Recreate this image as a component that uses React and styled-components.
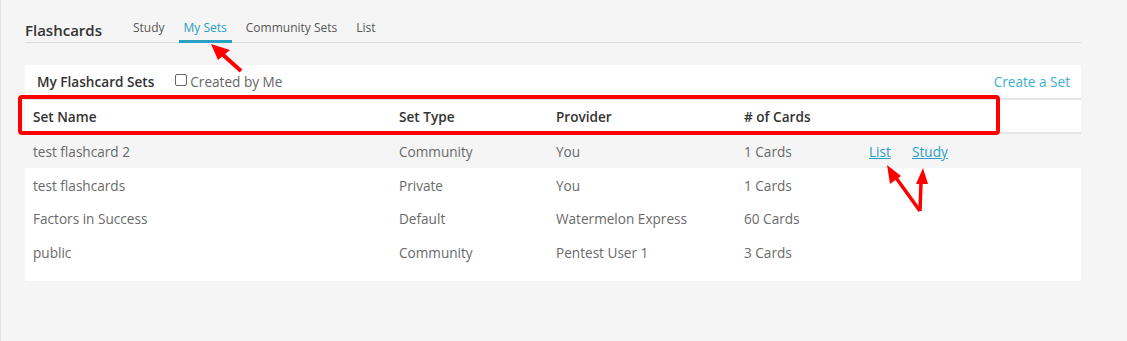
import React from "react";
import styled, { createGlobalStyle } from "styled-components";

const Global = createGlobalStyle`
  html, body { margin: 0; padding: 0; background: #f5f5f5; }
  body { font-family: "Open Sans", "Noto Sans", sans-serif; }
`;

const Page = styled.div`
  position: relative;
  width: 1127px;
  height: 341px;
  box-sizing: border-box;
  border-left: 1px solid #e2e2e2;
  background: #f5f5f5;
  padding: 0 46px 0 24px;
`;

const Header = styled.div`
  display: flex;
  align-items: flex-end;
  height: 43px;
  border-bottom: 1px solid #dcdcdc;
  box-sizing: border-box;
`;

const Title = styled.h1`
  margin: 0 26px 0 0;
  font-size: 15px;
  font-weight: 600;
  color: #333;
  line-height: 20px;
  padding-bottom: 2px;
`;

const Tabs = styled.nav`
  display: flex;
  align-items: flex-end;
`;

const Tab = styled.span`
  font-size: 12px;
  line-height: 16px;
  color: ${(p) => (p.$active ? "#2a9fc4" : "#555")};
  padding: 0 5px 4px;
  margin-right: 9px;
  border-bottom: 3px solid ${(p) => (p.$active ? "#2a9fc4" : "transparent")};
  margin-bottom: -1px;
`;

const Card = styled.div`
  margin-top: 22px;
  background: #fff;
  border-radius: 2px;
  padding-bottom: 12px;
`;

const CardTop = styled.div`
  display: flex;
  align-items: center;
  height: 33px;
  padding: 0 11px 0 12px;
  border-bottom: 2px solid #e6e6e6;
`;

const CardTitle = styled.span`
  font-size: 13.6px;
  font-weight: 600;
  color: #333;
  margin-right: 21px;
`;

const Check = styled.label`
  display: flex;
  align-items: center;
  font-size: 13.6px;
  color: #666;
  gap: 3px;
  flex: 1;
`;

const Box = styled.span`
  width: 10px;
  height: 10px;
  border: 1px solid #666;
  border-radius: 2px;
  margin-top: -3px;
`;

const CreateLink = styled.a`
  font-size: 13.6px;
  color: #3cb0d5;
  text-decoration: none;
`;

const cols = "366px 157px 188px 125px 43px 1fr";

const HeadRow = styled.div`
  display: grid;
  grid-template-columns: ${cols};
  align-items: center;
  height: 32px;
  padding-left: 8px;
  border-bottom: 2px solid #e6e6e6;
  font-size: 13.6px;
  font-weight: 600;
  color: #333;
`;

const Row = styled.div`
  display: grid;
  grid-template-columns: ${cols};
  align-items: center;
  height: ${(p) => p.$h}px;
  padding-left: 8px;
  background: ${(p) => (p.$shade ? "#f5f5f5" : "#fff")};
  font-size: 13.6px;
  color: #6a6a6a;
`;

const ActLink = styled.a`
  color: #2a9fc4;
  text-decoration: underline;
  font-size: 13.6px;
`;

const Overlay = styled.svg`
  position: absolute;
  left: 0;
  top: 0;
  pointer-events: none;
`;

const rows = [
  ["test flashcard 2", "Community", "You", "1 Cards", true, 34],
  ["test flashcards", "Private", "You", "1 Cards", false, 34],
  ["Factors in Success", "Default", "Watermelon Express", "60 Cards", false, 33],
  ["public", "Community", "Pentest User 1", "3 Cards", false, 34],
];

export default function App() {
  return (
    <>
      <Global />
      <Page>
        <Header>
          <Title>Flashcards</Title>
          <Tabs>
            <Tab>Study</Tab>
            <Tab $active>My Sets</Tab>
            <Tab>Community Sets</Tab>
            <Tab>List</Tab>
          </Tabs>
        </Header>
        <Card>
          <CardTop>
            <CardTitle>My Flashcard Sets</CardTitle>
            <Check>
              <Box />
              Created by Me
            </Check>
            <CreateLink>Create a Set</CreateLink>
          </CardTop>
          <HeadRow>
            <span>Set Name</span>
            <span>Set Type</span>
            <span>Provider</span>
            <span># of Cards</span>
            <span />
            <span />
          </HeadRow>
          {rows.map(([n, t, p, c, act, h], i) => (
            <Row key={i} $shade={i === 0} $h={h}>
              <span>{n}</span>
              <span>{t}</span>
              <span>{p}</span>
              <span>{c}</span>
              <span>{act && <ActLink>List</ActLink>}</span>
              <span>{act && <ActLink>Study</ActLink>}</span>
            </Row>
          ))}
        </Card>
        <Overlay width="1127" height="341" viewBox="0 0 1127 341">
          <rect x="19" y="97" width="978" height="36" rx="2" fill="none" stroke="#ff0000" strokeWidth="4" />
          <line x1="240" y1="71" x2="220" y2="53" stroke="#ff0000" strokeWidth="4" />
          <polygon points="210,44 229,50 217,60" fill="#ff0000" />
          <line x1="919" y1="211" x2="893" y2="175" stroke="#ff0000" strokeWidth="3.5" />
          <polygon points="886,165 900,176 889,184" fill="#ff0000" />
          <line x1="919" y1="211" x2="920" y2="182" stroke="#ff0000" strokeWidth="3.5" />
          <polygon points="922,168 927,184 915,184" fill="#ff0000" />
        </Overlay>
      </Page>
    </>
  );
}
